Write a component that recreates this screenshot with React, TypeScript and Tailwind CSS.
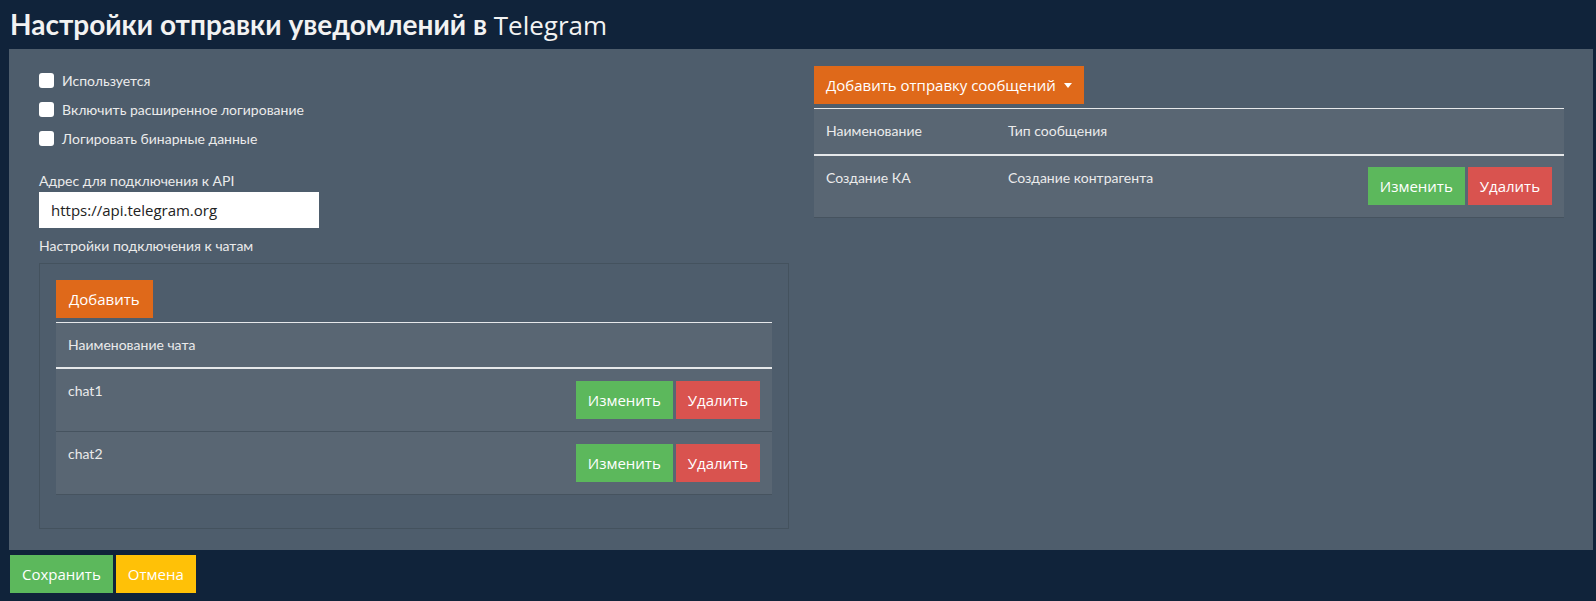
import React from "react";

const btn = "inline-flex items-center h-[38px] px-[12px] text-[15px] text-white font-['Open_Sans',sans-serif]";

function Checkbox({ label }: { label: string }) {
  return (
    <label className="flex items-center h-[29px] gap-[8px]">
      <span className="w-[15px] h-[15px] rounded-[3px] bg-white" />
      <span className="text-[14px] text-[#ebebeb]">{label}</span>
    </label>
  );
}

function RowButtons() {
  return (
    <div className="flex gap-[3px]">
      <button className={`${btn} bg-[#5cb85c]`}>Изменить</button>
      <button className={`${btn} bg-[#d9534f]`}>Удалить</button>
    </div>
  );
}

export default function App() {
  const chats = ["chat1", "chat2"];

  return (
    <div className="min-h-screen bg-[#10233a] font-['Lato',sans-serif] pb-[9px]">
      <h1 className="h-[49px] pl-[10px] pt-[5px] text-[28px] text-[#f2f2f2] leading-[38px]">
        <span className="font-bold">Настройки отправки уведомлений в </span>
        <span className="font-['Open_Sans',sans-serif] text-[26px]">Telegram</span>
      </h1>

      <div className="ml-[9px] mr-[3px] bg-[#4e5d6c] pl-[30px] pr-[29px] pt-[17px] pb-[21px] grid grid-cols-2 gap-[25px] items-start">
        {/* left */}
        <div>
          <Checkbox label="Используется" />
          <Checkbox label="Включить расширенное логирование" />
          <Checkbox label="Логировать бинарные данные" />

          <div className="mt-[18px] text-[14px] leading-[20px] text-[#ebebeb]">Адрес для подключения к API</div>
          <input
            defaultValue="https://api.telegram.org"
            className="mt-[1px] block w-[280px] h-[36px] bg-white px-[12px] text-[15px] text-[#222] font-['Open_Sans',sans-serif] outline-none"
          />
          <div className="mt-[8px] text-[14px] leading-[20px] text-[#ebebeb]">Настройки подключения к чатам</div>

          <div className="mt-[7px] border border-[#44525e] p-[16px]">
            <button className={`${btn} h-[37px] px-[13px] bg-[#df691a] font-['Lato',sans-serif]`}>Добавить</button>
            <div className="mt-[4px] mb-[17px] bg-[#596673] border-t border-[#e6e8ea]">
              <div className="h-[46px] px-[12px] pt-[12px] text-[14px] leading-[20px] text-[#ebebeb] border-b-2 border-[#e6e8ea]">
                Наименование чата
              </div>
              {chats.map((c) => (
                <div key={c} className="flex justify-between px-[12px] py-[12px] border-b border-[#46535f]">
                  <span className="text-[14px] leading-[20px] text-[#ebebeb]">{c}</span>
                  <RowButtons />
                </div>
              ))}
            </div>
          </div>
        </div>

        {/* right */}
        <div>
          <button className={`${btn} h-[38px] px-[12px] bg-[#df691a] font-['Lato',sans-serif] gap-[8px]`}>
            Добавить отправку сообщений
            <span className="w-0 h-0 border-l-[4px] border-r-[4px] border-t-[5px] border-l-transparent border-r-transparent border-t-white" />
          </button>
          <div className="mt-[4px] bg-[#596673] border-t border-[#e6e8ea]">
            <div className="flex h-[47px] px-[12px] pt-[12px] text-[14px] leading-[20px] text-[#ebebeb] border-b-2 border-[#e6e8ea]">
              <span className="w-[182px]">Наименование</span>
              <span>Тип сообщения</span>
            </div>
            <div className="flex px-[12px] pt-[11px] pb-[12px] border-b border-[#46535f] text-[14px] leading-[20px] text-[#ebebeb]">
              <span className="w-[182px] pt-[1px]">Создание КА</span>
              <span className="flex-1 pt-[1px]">Создание контрагента</span>
              <RowButtons />
            </div>
          </div>
        </div>
      </div>

      <div className="ml-[10px] mt-[5px] flex gap-[3px]">
        <button className={`${btn} bg-[#5cb85c]`}>Сохранить</button>
        <button className={`${btn} bg-[#ffc107]`}>Отмена</button>
      </div>
    </div>
  );
}
